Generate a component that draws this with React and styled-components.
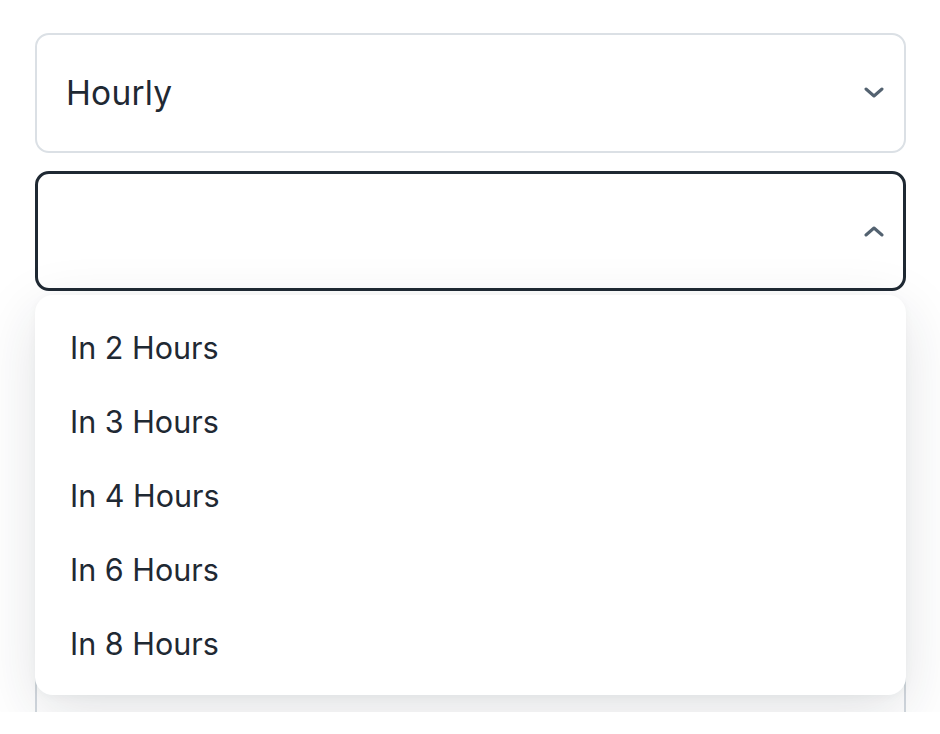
import React from 'react';
import styled, { createGlobalStyle } from 'styled-components';

const GlobalStyle = createGlobalStyle`
  body {
    margin: 0;
    background: #ffffff;
    font-family: Inter, "Noto Sans", sans-serif;
  }
`;

const textColor = '#1f2933';

const Page = styled.div`
  height: 712px;
  overflow: hidden;
  padding: 33px 34px 0 35px;
  box-sizing: border-box;
  display: flex;
  flex-direction: column;
  gap: 18px;
`;

const Field = styled.div`
  position: relative;
`;

const SelectBox = styled.div`
  box-sizing: border-box;
  height: 120px;
  border-radius: 14px;
  border: ${(p) => (p.open ? `3px solid ${textColor}` : '2px solid #dbe0e5')};
  display: flex;
  align-items: center;
  justify-content: space-between;
  padding: 0 ${(p) => (p.open ? '18px' : '19px')} 0 ${(p) => (p.open ? '28px' : '29px')};
  background: transparent;
  color: ${textColor};
  font-size: 33.5px;
  letter-spacing: 0.2px;
`;

const Chevron = styled.svg`
  width: 22px;
  height: 12px;
  color: #536270;
`;

const Menu = styled.ul`
  position: absolute;
  z-index: 2;
  top: calc(100% + 4px);
  left: 0;
  right: 0;
  margin: 0;
  padding: 15px 0;
  list-style: none;
  background: #ffffff;
  border-radius: 18px;
  box-shadow: 0 18px 60px rgba(30, 41, 51, 0.13), 0 2px 8px rgba(30, 41, 51, 0.04);
`;

const Option = styled.li`
  height: 74px;
  display: flex;
  align-items: center;
  padding-left: 35px;
  font-size: 30.5px;
  color: ${textColor};
`;

const NextField = styled.div`
  box-sizing: border-box;
  height: 500px;
  border-radius: 14px;
  border: 2px solid #d3d9df;
  flex-shrink: 0;
`;

const ChevronIcon = ({ up }) => (
  <Chevron viewBox="0 0 22 12" fill="none">
    <path
      d={up ? 'M3 10 L11 3 L19 10' : 'M3 2 L11 9 L19 2'}
      stroke="currentColor"
      strokeWidth="3"
      strokeLinecap="round"
      strokeLinejoin="round"
    />
  </Chevron>
);

const options = ['In 2 Hours', 'In 3 Hours', 'In 4 Hours', 'In 6 Hours', 'In 8 Hours'];

export default function App() {
  return (
    <>
      <GlobalStyle />
      <Page>
        <Field>
          <SelectBox>
            <span>Hourly</span>
            <ChevronIcon />
          </SelectBox>
        </Field>
        <Field>
          <SelectBox open>
            <span />
            <ChevronIcon up />
          </SelectBox>
          <Menu>
            {options.map((o) => (
              <Option key={o}>{o}</Option>
            ))}
          </Menu>
        </Field>
        <NextField />
      </Page>
    </>
  );
}
